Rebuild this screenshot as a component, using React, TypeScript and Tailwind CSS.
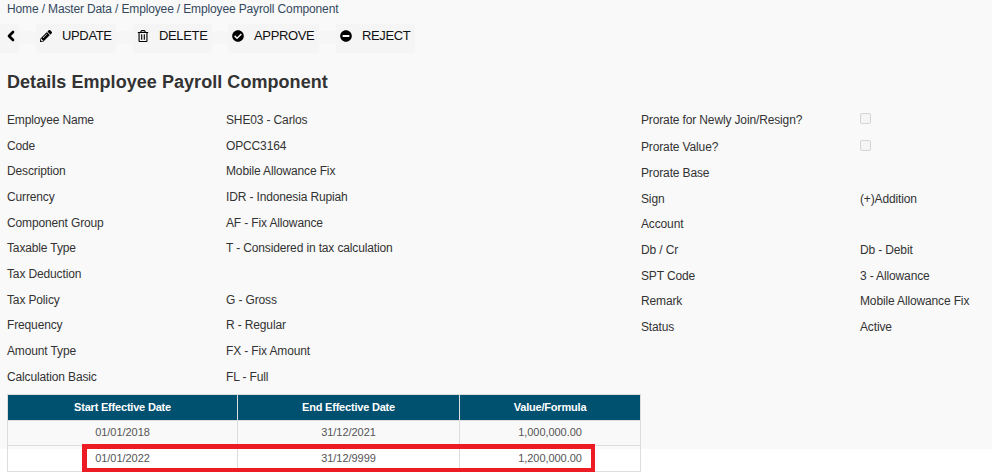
import { ChevronLeft } from 'lucide-react'
import { FaCheckCircle, FaMinusCircle, FaPencilAlt, FaRegTrashAlt } from 'react-icons/fa'

const leftRows = [
  ['Employee Name', 'SHE03 - Carlos'],
  ['Code', 'OPCC3164'],
  ['Description', 'Mobile Allowance Fix'],
  ['Currency', 'IDR - Indonesia Rupiah'],
  ['Component Group', 'AF - Fix Allowance'],
  ['Taxable Type', 'T - Considered in tax calculation'],
  ['Tax Deduction', ''],
  ['Tax Policy', 'G - Gross'],
  ['Frequency', 'R - Regular'],
  ['Amount Type', 'FX - Fix Amount'],
  ['Calculation Basic', 'FL - Full'],
]

const rightRows = [
  ['Prorate Base', ''],
  ['Sign', '(+)Addition'],
  ['Account', ''],
  ['Db / Cr', 'Db - Debit'],
  ['SPT Code', '3 - Allowance'],
  ['Remark', 'Mobile Allowance Fix'],
  ['Status', 'Active'],
]

const periods = [
  { cells: ['01/01/2018', '31/12/2021', '1,000,000.00'], height: 'h-[25px]' },
  { cells: ['01/01/2022', '31/12/9999', '1,200,000.00'], height: 'h-[26px]' },
]

function ToolButton({ icon, label, width }: { icon: React.ReactNode; label: string; width: string }) {
  return (
    <div className={`flex h-[29px] items-center gap-[10px] bg-[#f5f5f5] pb-[5px] pl-[4px] text-[13px] tracking-[-0.35px] text-[#111] ${width}`}>
      <span className="flex w-[12px] justify-center">{icon}</span>
      <span>{label}</span>
    </div>
  )
}

function Spacer({ width }: { width: string }) {
  return <div className={`mb-[2px] h-[13px] bg-[#f6f6f6] ${width}`} />
}

function CheckRow({ label }: { label: string }) {
  return (
    <div className="flex h-[27px] items-center">
      <div className="w-[219px]">{label}</div>
      <div className="mb-[3px] h-[11px] w-[11px] rounded-[2px] border border-[#d5d5d5] bg-[#f5f5f5]" />
    </div>
  )
}

export default function App() {
  return (
    <div className="relative h-[476px] w-[992px] overflow-hidden bg-white font-['Liberation_Sans',sans-serif] text-[12px] tracking-[-0.14px] text-[#333]">
      <div className="h-[449px] bg-[#f9f9f9]">
        <div className="px-[7px] pt-[1px] text-[12px] leading-[16px] text-[#34495e]">
          Home / Master Data / Employee / Employee Payroll Component
        </div>
        <div className="mt-[7px] flex items-center">
          <div className="flex h-[29px] w-[19px] items-center justify-center bg-[#f5f5f5] pb-[5px] pl-[3px]">
            <ChevronLeft size={16} strokeWidth={4} className="text-black" />
          </div>
          <Spacer width="w-[17px]" />
          <ToolButton width="w-[80px]" icon={<FaPencilAlt size={12} className="text-black" />} label="UPDATE" />
          <Spacer width="w-[17px]" />
          <ToolButton width="w-[79px]" icon={<FaRegTrashAlt size={12} className="text-black" />} label="DELETE" />
          <Spacer width="w-[16px]" />
          <ToolButton width="w-[91px]" icon={<FaCheckCircle size={12} className="text-black" />} label="APPROVE" />
          <Spacer width="w-[17px]" />
          <ToolButton width="w-[79px]" icon={<FaMinusCircle size={12} className="text-black" />} label="REJECT" />
        </div>
        <h1 className="mt-[15px] pl-[7px] text-[18px] leading-[28px] font-bold tracking-[0.05px] text-[#333]">
          Details Employee Payroll Component
        </h1>
        <div className="mt-[11px] flex pl-[7px]">
          <div className="w-[634px]">
            {leftRows.map(([label, value]) => (
              <div key={label} className="flex h-[25.7px] items-center">
                <div className="w-[219px]">{label}</div>
                <div>{value}</div>
              </div>
            ))}
          </div>
          <div className="-mt-[1px]">
            <CheckRow label="Prorate for Newly Join/Resign?" />
            <CheckRow label="Prorate Value?" />
            {rightRows.map(([label, value]) => (
              <div key={label} className="flex h-[25.7px] items-center">
                <div className="w-[219px]">{label}</div>
                <div>{value}</div>
              </div>
            ))}
          </div>
        </div>
      </div>

      {/* date table sits across the grey/white boundary */}
      <table className="absolute top-[394px] left-[7px] w-[634px] table-fixed border-collapse border border-[#ddd] text-center text-[11px] tracking-[-0.05px] text-[#555]">
        <thead>
          <tr className="h-[26px] bg-[#00506f] text-white">
            <th className="w-[230px] border border-[#ddd] font-bold tracking-[-0.2px]">Start Effective Date</th>
            <th className="w-[222px] border border-[#ddd] font-bold tracking-[-0.2px]">End Effective Date</th>
            <th className="border border-[#ddd] font-bold tracking-[-0.2px]">Value/Formula</th>
          </tr>
        </thead>
        <tbody>
          {periods.map((row) => (
            <tr key={row.cells[0]} className={row.height}>
              {row.cells.map((cell) => (
                <td key={cell} className="border border-[#ddd] pb-[1px]">
                  {cell}
                </td>
              ))}
            </tr>
          ))}
        </tbody>
      </table>

      {/* red highlight drawn over the screenshot */}
      <div className="absolute top-[444px] left-[82px] h-[28px] w-[513px] border-[4px] border-t-[5px] border-l-[5px] border-[#ed1c24]" />
    </div>
  )
}
